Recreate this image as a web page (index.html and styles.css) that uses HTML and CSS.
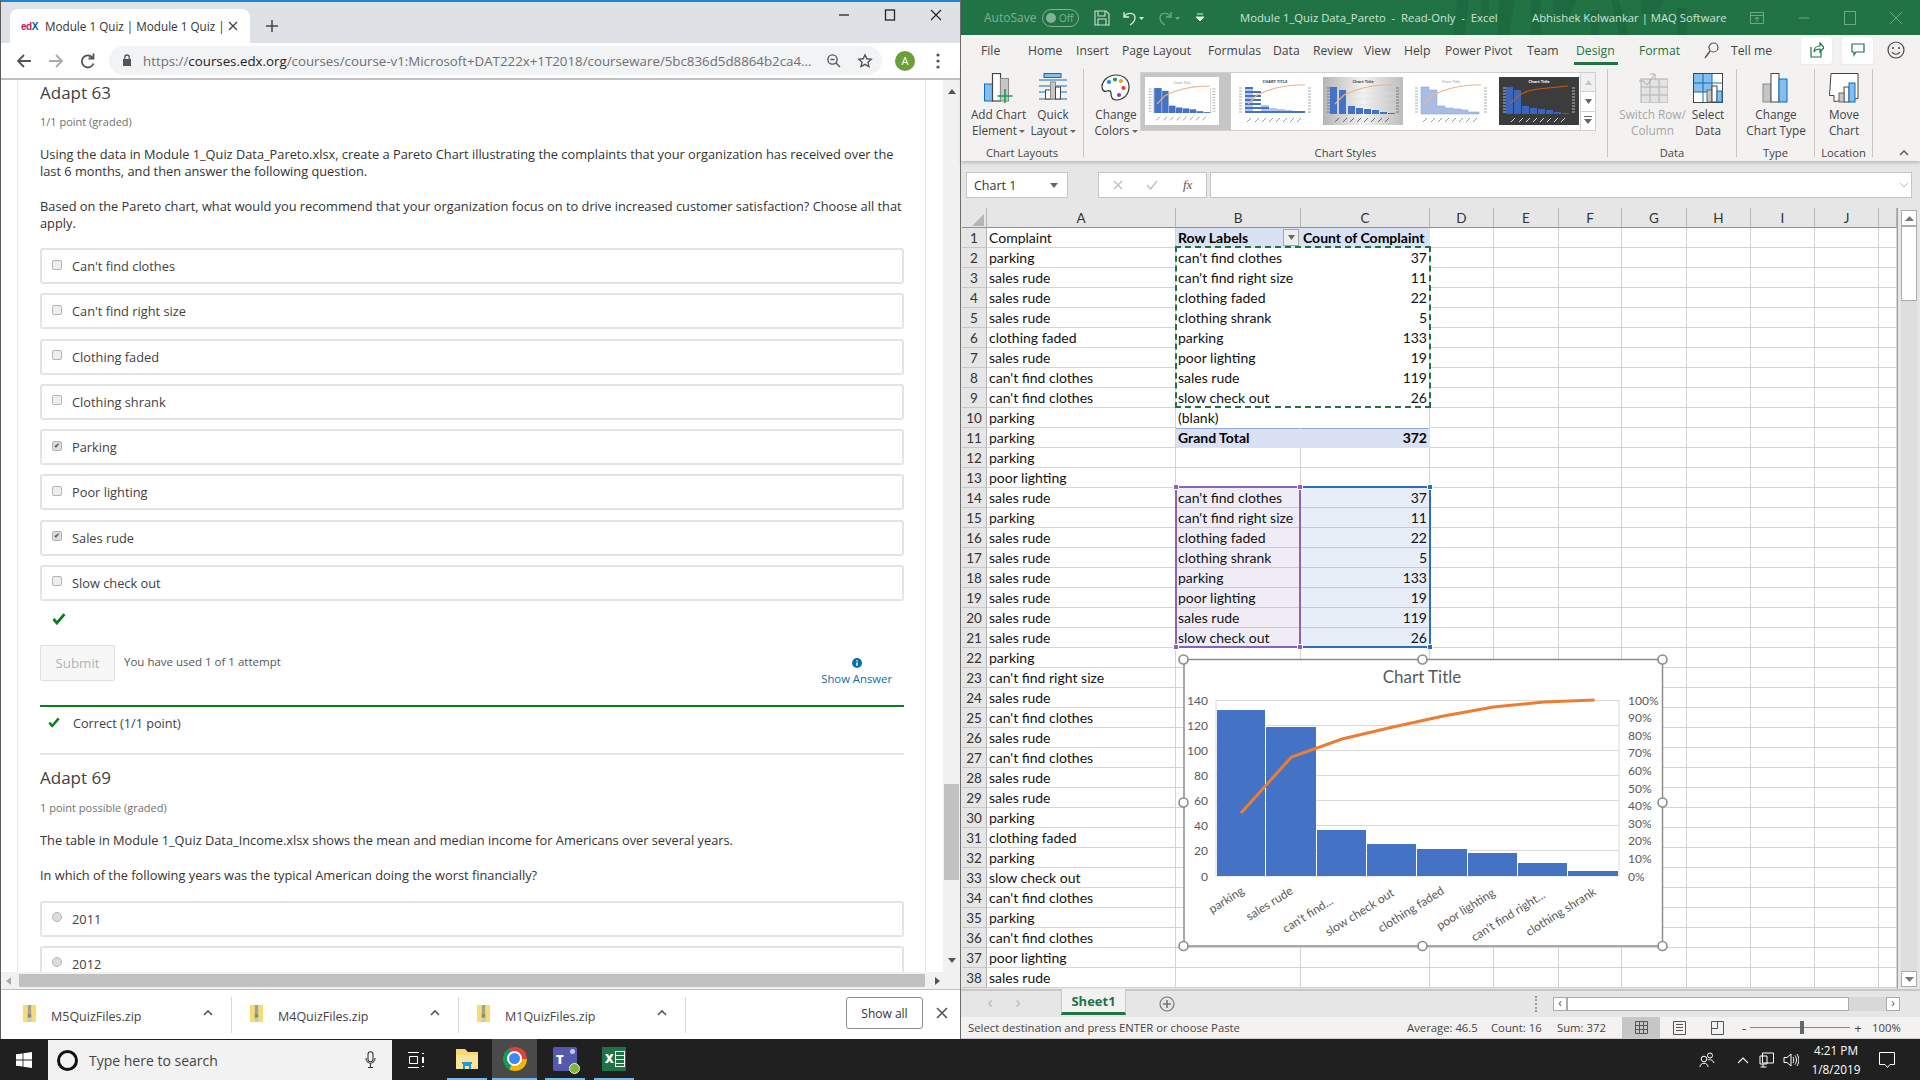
FILE: index.html
```html
<!DOCTYPE html>
<html lang="en">
<head>
<meta charset="utf-8">
<title>Module 1 Quiz and Pareto workbook</title>
<link rel="stylesheet" href="styles.css">
</head>
<body>
<svg class="defs" width="0" height="0" aria-hidden="true">
  <symbol id="ticks" viewBox="0 0 80 48">
    <g stroke-width="1" fill="none">
      <path d="M12 45l4-4M20 45l4-4M27 45l4-4M34 45l4-4M41 45l4-4M48 45l4-4M55 45l4-4M62 45l4-4"/>
    </g>
    <path d="M4 11h3M4 14h3M4 17h3M4 20h3M4 23h3M4 26h3M4 29h3M4 32h3M4 35h3M73 11h3M73 14h3M73 17h3M73 20h3M73 23h3M73 26h3M73 29h3M73 32h3M73 35h3" stroke-width=".8"/>
  </symbol>
</svg>

<div class="desktop">
  <div class="windows">

    <!-- Browser window -->
    <section class="chrome">
      <div class="tabstrip">
        <div class="tab">
          <span class="fav"><b>ed</b><i>X</i></span>
          <span class="tab-title">Module 1 Quiz | Module 1 Quiz |</span>
          <svg class="tab-x" width="10" height="10" viewBox="0 0 10 10"><path d="M1 1l8 8M9 1l-8 8" stroke="#444" stroke-width="1.3"/></svg>
        </div>
        <svg class="newtab" width="14" height="14" viewBox="0 0 14 14"><path d="M7 1v12M1 7h12" stroke="#444" stroke-width="1.5"/></svg>
        <div class="winctl">
          <svg width="12" height="12" viewBox="0 0 12 12"><path d="M1 6h10" stroke="#222" stroke-width="1.3"/></svg>
          <svg width="12" height="12" viewBox="0 0 12 12"><rect x="1.5" y="1" width="9" height="10" fill="none" stroke="#222" stroke-width="1.3"/></svg>
          <svg width="12" height="12" viewBox="0 0 12 12"><path d="M1 1l10 10M11 1L1 11" stroke="#222" stroke-width="1.1"/></svg>
        </div>
      </div>
      <div class="toolbar">
        <svg width="18" height="18" viewBox="0 0 18 18"><path d="M16 9H3M9 3L3 9l6 6" fill="none" stroke="#555" stroke-width="1.8"/></svg>
        <svg width="18" height="18" viewBox="0 0 18 18"><path d="M2 9h13M9 3l6 6-6 6" fill="none" stroke="#aaa" stroke-width="1.8"/></svg>
        <svg width="18" height="18" viewBox="0 0 18 18"><path d="M14.5 11.5a6 6 0 1 1-.6-5.3M14.5 1.5v5h-5" fill="none" stroke="#555" stroke-width="1.8"/></svg>
        <div class="omnibox">
          <svg width="10" height="13" viewBox="0 0 10 13"><rect x="1" y="5" width="8" height="7" fill="#555"/><path d="M2.8 5V3.2a2.2 2.2 0 0 1 4.4 0V5" fill="none" stroke="#555" stroke-width="1.3"/></svg>
          <span class="url"><span class="url-dim">https://</span>courses.edx.org<span class="url-dim">/courses/course-v1:Microsoft+DAT222x+1T2018/courseware/5bc836d5d8864b2ca4...</span></span>
          <svg width="15" height="15" viewBox="0 0 15 15"><circle cx="6.5" cy="6.5" r="4.6" fill="none" stroke="#555" stroke-width="1.4"/><path d="M10 10l4 4M4.5 6.5h4" stroke="#555" stroke-width="1.4"/></svg>
          <svg class="star" width="16" height="16" viewBox="0 0 16 16"><path d="M8 1.8l1.9 4 4.3.5-3.2 3 .9 4.3L8 11.4l-3.9 2.2.9-4.3-3.2-3 4.3-.5z" fill="none" stroke="#555" stroke-width="1.4"/></svg>
        </div>
        <span class="avatar">A</span>
        <svg class="dots" width="4" height="16" viewBox="0 0 4 16"><circle cx="2" cy="2" r="1.6" fill="#555"/><circle cx="2" cy="8" r="1.6" fill="#555"/><circle cx="2" cy="14" r="1.6" fill="#555"/></svg>
      </div>

      <div class="viewport">
        <div class="page">
          <div class="card">
            <h3 class="q-title">Adapt 63</h3>
            <div class="q-meta">1/1 point (graded)</div>
            <p class="q-text">Using the data in Module 1_Quiz Data_Pareto.xlsx, create a Pareto Chart illustrating the complaints that your organization has received over the last 6 months, and then answer the following question.</p>
            <p class="q-text">Based on the Pareto chart, what would you recommend that your organization focus on to drive increased customer satisfaction? Choose all that apply.</p>
            <div class="opt"><span class="box"></span>Can't find clothes</div>
            <div class="opt"><span class="box"></span>Can't find right size</div>
            <div class="opt"><span class="box"></span>Clothing faded</div>
            <div class="opt"><span class="box"></span>Clothing shrank</div>
            <div class="opt"><span class="box on">✔</span>Parking</div>
            <div class="opt"><span class="box"></span>Poor lighting</div>
            <div class="opt"><span class="box on">✔</span>Sales rude</div>
            <div class="opt"><span class="box"></span>Slow check out</div>
            <svg class="verdict" width="14" height="12" viewBox="0 0 14 12"><path d="M1.5 6l3.4 4L12.5 1.2" fill="none" stroke="#0a7d1e" stroke-width="2.8"/></svg>
            <div class="actions">
              <button class="submit" type="button">Submit</button>
              <span class="attempts">You have used 1 of 1 attempt</span>
              <span class="show">
                <svg width="10" height="10" viewBox="0 0 10 10"><circle cx="5" cy="5" r="5" fill="#0b6fa4"/><path d="M5 2.2v1.2M5 4.4v3.4" stroke="#fff" stroke-width="1.5"/></svg>
                <span>Show Answer</span>
              </span>
            </div>
            <div class="result">
              <svg width="12" height="11" viewBox="0 0 14 12"><path d="M1.5 6l3.4 4L12.5 1.2" fill="none" stroke="#0a7d1e" stroke-width="2.8"/></svg>
              <span>Correct (1/1 point)</span>
            </div>
            <h3 class="q-title second">Adapt 69</h3>
            <div class="q-meta">1 point possible (graded)</div>
            <p class="q-text solo">The table in Module 1_Quiz Data_Income.xlsx shows the mean and median income for Americans over several years.</p>
            <p class="q-text solo">In which of the following years was the typical American doing the worst financially?</p>
            <div class="opt"><span class="box radio"></span>2011</div>
            <div class="opt"><span class="box radio"></span>2012</div>
          </div>
        </div>
        <div class="vscroll">
          <span class="arr up"></span>
          <span class="vthumb"></span>
          <span class="arr down"></span>
        </div>
      </div>
      <div class="hscroll"><span class="arr left"></span><span class="hthumb"></span><span class="arr right"></span></div>

      <div class="shelf">
        <div class="dl"><svg class="zip" width="13" height="17" viewBox="0 0 13 17"><rect width="13" height="17" fill="#f6dc72"/><rect x="4.5" width="4" height="17" fill="#cfc9a6"/><path d="M5 1h3M5 3h3M5 5h3M5 7h3" stroke="#777"/><rect x="4.8" y="8.5" width="3.4" height="4" fill="#888"/></svg><span class="dl-name">M5QuizFiles.zip</span><svg class="caret" width="10" height="7" viewBox="0 0 10 7"><path d="M1 6l4-4 4 4" fill="none" stroke="#555" stroke-width="1.6"/></svg></div>
        <div class="dl"><svg class="zip" width="13" height="17" viewBox="0 0 13 17"><rect width="13" height="17" fill="#f6dc72"/><rect x="4.5" width="4" height="17" fill="#cfc9a6"/><path d="M5 1h3M5 3h3M5 5h3M5 7h3" stroke="#777"/><rect x="4.8" y="8.5" width="3.4" height="4" fill="#888"/></svg><span class="dl-name">M4QuizFiles.zip</span><svg class="caret" width="10" height="7" viewBox="0 0 10 7"><path d="M1 6l4-4 4 4" fill="none" stroke="#555" stroke-width="1.6"/></svg></div>
        <div class="dl"><svg class="zip" width="13" height="17" viewBox="0 0 13 17"><rect width="13" height="17" fill="#f6dc72"/><rect x="4.5" width="4" height="17" fill="#cfc9a6"/><path d="M5 1h3M5 3h3M5 5h3M5 7h3" stroke="#777"/><rect x="4.8" y="8.5" width="3.4" height="4" fill="#888"/></svg><span class="dl-name">M1QuizFiles.zip</span><svg class="caret" width="10" height="7" viewBox="0 0 10 7"><path d="M1 6l4-4 4 4" fill="none" stroke="#555" stroke-width="1.6"/></svg></div>
        <button class="showall" type="button">Show all</button>
        <svg class="shelf-x" width="12" height="12" viewBox="0 0 12 12"><path d="M1 1l10 10M11 1L1 11" stroke="#555" stroke-width="1.6"/></svg>
      </div>
    </section>

    <!-- Excel window -->
    <section class="excel">
      <div class="titlebar">
        <span class="autosave">AutoSave</span>
        <span class="toggle"><i></i><span>Off</span></span>
        <svg class="t-save" width="16" height="16" viewBox="0 0 16 16"><path d="M1 1h11l3 3v11H1z M4 1v5h7V1 M4 15v-6h8v6" fill="none" stroke="#c9e0d3" stroke-width="1.1"/></svg>
        <svg class="t-undo" width="22" height="16" viewBox="0 0 22 16"><path d="M2 2v5h5M2 7c3-5 11-5 11 1 0 3-2 5-5 7" fill="none" stroke="#dceee4" stroke-width="1.3"/><path d="M17 7h5l-2.5 3z" fill="#dceee4"/></svg>
        <svg class="t-redo" width="22" height="16" viewBox="0 0 22 16"><path d="M13 2v5H8M13 7c-3-5-11-5-11 1 0 3 2 5 5 7" fill="none" stroke="#6fa88a" stroke-width="1.3"/><path d="M17 7h5l-2.5 3z" fill="#6fa88a"/></svg>
        <svg class="t-cust" width="8" height="10" viewBox="0 0 8 10"><path d="M1 1h6M0 4h8l-4 4z" stroke="#dceee4" fill="#dceee4"/></svg>
        <span class="doc">Module 1_Quiz Data_Pareto&nbsp; -&nbsp; Read-Only&nbsp; -&nbsp; Excel</span>
        <span class="user">Abhishek Kolwankar | MAQ Software</span>
        <svg class="t-rib" width="14" height="14" viewBox="0 0 14 14"><path d="M.5 1.5h13v11H.5zM.5 4.5h13M7 11V6M5 8l2-2 2 2" fill="none" stroke="#6fa88a"/></svg>
        <svg class="t-min" width="12" height="12" viewBox="0 0 12 12"><path d="M1 6h10" stroke="#6fa88a"/></svg>
        <svg class="t-max" width="12" height="14" viewBox="0 0 12 14"><rect x=".5" y=".5" width="11" height="13" fill="none" stroke="#6fa88a"/></svg>
        <svg class="t-close" width="14" height="14" viewBox="0 0 14 14"><path d="M1 1l12 12M13 1L1 13" stroke="#6fa88a"/></svg>
        <svg class="t-art" width="250" height="35" viewBox="0 0 250 35"><g fill="#1e6a40"><path d="M6 0h12l-4 35H2zM30 0h8v18h-8zM48 0h16l-6 35H46zM80 0h10v35H80zM102 0h24l-10 20h-14zM140 10h8v25h-8zM160 0h8l10 35h-10zM190 0h24l-10 14h-14zM226 8h10v27h-10z"/></g></svg>
      </div>

      <nav class="rtabs">
        <span class="rt file">File</span>
        <span class="rt home">Home</span>
        <span class="rt ins">Insert</span>
        <span class="rt pl">Page Layout</span>
        <span class="rt fm">Formulas</span>
        <span class="rt dt">Data</span>
        <span class="rt rv">Review</span>
        <span class="rt vw">View</span>
        <span class="rt hp">Help</span>
        <span class="rt pp">Power Pivot</span>
        <span class="rt tm">Team</span>
        <span class="rt ds">Design</span>
        <span class="rt ft">Format</span>
        <span class="rt tell"><svg width="15" height="17" viewBox="0 0 15 17"><circle cx="9.5" cy="5.5" r="4.5" fill="none" stroke="#555" stroke-width="1.2"/><path d="M6 9l-5 7" stroke="#555" stroke-width="1.4"/></svg>Tell me</span>
        <span class="rbtn share"><svg width="14" height="16" viewBox="0 0 14 16"><path d="M1 5v10h10V9M4 10c0-4 3-6 6-6V1l4 4.5L10 10V7c-3 0-5 1-6 3z" fill="none" stroke="#217346" stroke-width="1.2"/></svg></span>
        <span class="rbtn comment"><svg width="14" height="14" viewBox="0 0 14 14"><path d="M1 1h12v8H5L3 12V9H1z" fill="none" stroke="#217346" stroke-width="1.2"/></svg></span>
        <svg class="smile" width="18" height="18" viewBox="0 0 18 18"><circle cx="9" cy="9" r="8" fill="none" stroke="#444" stroke-width="1.2"/><circle cx="6" cy="7" r="1" fill="#444"/><circle cx="12" cy="7" r="1" fill="#444"/><path d="M5 11c2 3 6 3 8 0" fill="none" stroke="#444" stroke-width="1.2"/></svg>
      </nav>

      <div class="ribbon">
        <div class="rgroup g-layouts">
          <div class="rg-body">
            <div class="rb w56">
              <svg width="30" height="30" viewBox="0 0 30 30"><rect x=".5" y="11" width="8" height="17" fill="#83beec" stroke="#0f6cbd"/><rect x="8.5" y=".5" width="8" height="27.5" fill="#fff" stroke="#444" stroke-width="1.2"/><rect x="16.5" y="5.5" width="8" height="22.5" fill="#c6c6c6" stroke="#888"/><path d="M21 16v14M13.500 23h15" stroke="#12a150" stroke-width="1.6"/></svg>
              <span>Add Chart<br>Element <u></u></span>
            </div>
            <div class="rb w52">
              <svg width="30" height="30" viewBox="0 0 30 30"><path d="M1 7h28M1 13h28M1 19h28M1 26h28" stroke="#0f6cbd" stroke-width="1.1"/><rect x="6" y=".5" width="17" height="4" fill="#83beec" stroke="#0f6cbd"/><rect x="7.500" y="17" width="5" height="9" fill="#fff" stroke="#444"/><rect x="12.500" y="9" width="5" height="17" fill="#c6c6c6" stroke="#888"/><rect x="17.500" y="14" width="5" height="12" fill="#fff" stroke="#444"/></svg>
              <span>Quick<br>Layout <u></u></span>
            </div>
          </div>
          <span class="rg-label">Chart Layouts</span>
        </div>
        <div class="rgroup g-styles">
          <div class="rg-body">
            <div class="rb w51">
              <svg width="30" height="30" viewBox="0 0 30 30"><path d="M15 2C7 2 1 8 1 14c0 4 3 5 5 4 2-1 4 0 4 2 0 3 1 7 5 7 8 0 13-6 13-13S23 2 15 2z" fill="#fff" stroke="#333" stroke-width="1.2"/><circle cx="8" cy="9" r="2.1" fill="#1e88e5"/><circle cx="14" cy="6.500" r="2.100" fill="#25a244"/><circle cx="20" cy="8" r="2.100" fill="#f59a23"/><circle cx="22.500" cy="15" r="2.100" fill="#e53935"/><circle cx="18" cy="22" r="2.100" fill="#8e3fb3"/></svg>
              <span>Change<br>Colors <u></u></span>
            </div>
            <div class="gallery">
              <div class="thumbs">
                <div class="th-sel">
                  <svg class="thumb" width="74" height="48" viewBox="0 0 80 48"><text x="40" y="6" class="thtext">Chart Title</text><path d="M9 10v27M71 10v27" stroke="#ccc"/><rect x="10" y="10" width="8" height="27" fill="#4472c4"/><rect x="18.500" y="13" width="7" height="24" fill="#4472c4"/><rect x="26" y="29" width="7" height="8" fill="#4472c4"/><rect x="33.500" y="31" width="7" height="6" fill="#4472c4"/><rect x="41" y="32" width="7" height="5" fill="#4472c4"/><rect x="48.500" y="33" width="7" height="4" fill="#4472c4"/><rect x="56" y="35" width="7" height="2" fill="#4472c4"/><rect x="63.500" y="36" width="7" height="1" fill="#4472c4"/><path d="M13 27l9-9 9-4 10-3 10-2 10-1 9 0" fill="none" stroke="#f4b183" stroke-width="1.2"/><use href="#ticks" stroke="#999"/></svg>
                </div>
                <svg class="thumb" width="80" height="48" viewBox="0 0 80 48"><text x="40" y="6" class="thtext bold">CHART TITLE</text><path d="M10 10h8v26h8v-8h8v3h8v1h8v1h7v2h11v1H10z" fill="#b4c7e7"/><path d="M10 10h8v2h-8zM10 14h16v2H10zM10 18h16v2H10zM10 22h16v2H10zM10 26h16v2H10zM10 30h24v2H10zM10 34h60v2H10z" fill="#4472c4"/><path d="M13 27l9-9 9-4 10-3 10-2 10-1 9 0" fill="none" stroke="#f4b183" stroke-width="1.2"/><use href="#ticks" stroke="#999"/></svg>
                <svg class="thumb" width="80" height="48" viewBox="0 0 80 48"><defs><linearGradient id="thg" x1="0" x2="1"><stop offset="0" stop-color="#b5b5b5"/><stop offset=".5" stop-color="#f2f2f2"/><stop offset="1" stop-color="#bdbdbd"/></linearGradient></defs><rect width="80" height="48" fill="url(#thg)"/><text x="40" y="6" class="thtext bold">Chart Title</text><path d="M5 16h70M5 22h70M5 28h70M5 34h70" stroke="#ddd" stroke-width=".6"/><rect x="7" y="10" width="7" height="27" fill="#4472c4"/><rect x="16" y="13" width="7" height="24" fill="#4472c4"/><rect x="25" y="29" width="7" height="8" fill="#4472c4"/><rect x="33" y="31" width="7" height="6" fill="#4472c4"/><rect x="41" y="32" width="7" height="5" fill="#4472c4"/><rect x="49" y="33" width="7" height="4" fill="#4472c4"/><rect x="57" y="35" width="7" height="2" fill="#4472c4"/><rect x="65" y="36" width="7" height="1" fill="#4472c4"/><path d="M12 27l9-9 9-4 10-3 10-2 10-1 9 0" fill="none" stroke="#f4b183" stroke-width="1.2"/><use href="#ticks" stroke="#666"/></svg>
                <svg class="thumb" width="80" height="48" viewBox="0 0 80 48"><text x="40" y="6" class="thtext">Chart Title</text><path d="M10 10h8v3h8v16h8v2h8v1h8v1h7v2h11v2H10z" fill="#a9bde4" stroke="#8faadc" stroke-width=".6"/><path d="M13 27l9-9 9-4 10-3 10-2 10-1 9 0" fill="none" stroke="#f4b183" stroke-width="1.2"/><use href="#ticks" stroke="#999"/></svg>
                <svg class="thumb" width="80" height="48" viewBox="0 0 80 48"><rect width="80" height="48" fill="#3c3c3c"/><text x="40" y="6" class="thtext white">Chart Title</text><rect x="7" y="10" width="7" height="27" fill="#3a66bb"/><rect x="15" y="13" width="7" height="24" fill="#3a66bb"/><rect x="23" y="29" width="7" height="8" fill="#3a66bb"/><rect x="31" y="31" width="7" height="6" fill="#3a66bb"/><rect x="39" y="32" width="7" height="5" fill="#3a66bb"/><rect x="47" y="33" width="7" height="4" fill="#3a66bb"/><rect x="55" y="35" width="7" height="2" fill="#3a66bb"/><rect x="63" y="36" width="7" height="1" fill="#3a66bb"/><path d="M11 27l9-9 9-4 10-2 10-1 10-1 10-1" fill="none" stroke="#c55a11" stroke-width="1.2"/><use href="#ticks" stroke="#ddd"/></svg>
              </div>
              <div class="spin">
                <span class="sp dim"><svg width="7" height="5" viewBox="0 0 7 5"><path d="M3.500 0l3.500 5H0z" fill="#c6c6c6"/></svg></span>
                <span class="sp"><svg width="7" height="5" viewBox="0 0 7 5"><path d="M0 0h7L3.500 5z" fill="#666"/></svg></span>
                <span class="sp"><svg width="8" height="9" viewBox="0 0 8 9"><path d="M0 0h8v1H0zM0 3h8L4 8z" fill="#666"/></svg></span>
              </div>
            </div>
          </div>
          <span class="rg-label">Chart Styles</span>
        </div>
        <div class="rgroup g-data">
          <div class="rg-body">
            <div class="rb w60 off">
              <svg width="30" height="30" viewBox="0 0 30 30"><rect x="3" y="6" width="27" height="24" fill="#e3e3e3" stroke="#b0b0b0"/><path d="M3 14h27M3 22h27M12 6v24M21 6v24" stroke="#b0b0b0"/><path d="M5 8l4 4 8-11M12 1h5v5M1 8h5" fill="none" stroke="#b0b0b0"/></svg>
              <span>Switch Row/<br>Column</span>
            </div>
            <div class="rb w48">
              <svg width="30" height="30" viewBox="0 0 30 30"><rect x=".5" y=".5" width="29" height="29" fill="#fff" stroke="#444"/><rect x="1" y="1" width="18" height="18" fill="#83beec"/><path d="M1 10h28M10 1v28M19 1v18M1 19h18" stroke="#0f6cbd"/><rect x="14" y="17" width="5" height="12" fill="#c6c6c6" stroke="#666"/><rect x="19" y="13" width="5" height="16" fill="#fff" stroke="#444"/><rect x="24" y="18" width="5" height="11" fill="#83beec" stroke="#0f6cbd"/></svg>
              <span>Select<br>Data</span>
            </div>
          </div>
          <span class="rg-label">Data</span>
        </div>
        <div class="rgroup g-type">
          <div class="rg-body">
            <div class="rb w70">
              <svg width="30" height="30" viewBox="0 0 30 30"><rect x="2" y="11" width="8" height="18" fill="#c6c6c6" stroke="#888"/><rect x="10" y=".5" width="8" height="28.500" fill="#fff" stroke="#444"/><rect x="18" y="6" width="8" height="23" fill="#83beec" stroke="#0f6cbd"/></svg>
              <span>Change<br>Chart Type</span>
            </div>
          </div>
          <span class="rg-label">Type</span>
        </div>
        <div class="rgroup g-loc">
          <div class="rg-body">
            <div class="rb w50">
              <svg width="30" height="30" viewBox="0 0 30 30"><path d="M2 .5h27v25l-24 3v-6H.5z" fill="#fff" stroke="#444"/><rect x="15" y="14" width="5" height="15" fill="#fff" stroke="#444"/><rect x="10" y="20" width="5" height="9" fill="#c6c6c6" stroke="#666"/><rect x="20" y="10" width="6" height="19" fill="#83beec" stroke="#0f6cbd"/></svg>
              <span>Move<br>Chart</span>
            </div>
          </div>
          <span class="rg-label">Location</span>
        </div>
        <svg class="collapse" width="10" height="7" viewBox="0 0 10 7"><path d="M1 6l4-4 4 4" fill="none" stroke="#555" stroke-width="1.4"/></svg>
      </div>

      <div class="fbar">
        <div class="namebox"><span>Chart 1</span><svg width="8" height="5" viewBox="0 0 8 5"><path d="M0 0h8L4 5z" fill="#666"/></svg></div>
        <span class="fdots"></span>
        <div class="fbtns">
          <svg width="10" height="10" viewBox="0 0 10 10"><path d="M1 1l8 8M9 1l-8 8" stroke="#c2c2c2" stroke-width="1.5"/></svg>
          <svg width="12" height="10" viewBox="0 0 12 10"><path d="M1 5l3.500 4L11 1" fill="none" stroke="#c2c2c2" stroke-width="1.5"/></svg>
          <i class="fx">fx</i>
        </div>
        <div class="finput"><svg width="8" height="5" viewBox="0 0 8 5"><path d="M0 0l4 4 4-4" fill="none" stroke="#bbb"/></svg></div>
      </div>

      <div class="sheetarea">
        <div class="sheet">
          <table class="grid">
            <colgroup><col class="c-h"><col class="c-a"><col class="c-b"><col class="c-c"><col class="c-d"><col class="c-e"><col class="c-f"><col class="c-g"><col class="c-h2"><col class="c-i"><col class="c-j"><col></colgroup>
            <thead><tr><th class="corner"><span></span></th><th>A</th><th>B</th><th>C</th><th>D</th><th>E</th><th>F</th><th>G</th><th>H</th><th>I</th><th>J</th><th></th></tr></thead>
            <tbody>
<tr><th>1</th><td>Complaint</td><td class="pv head nr"><span class="filter"><svg width="7" height="5" viewBox="0 0 7 5"><path d="M0 0h7L3.500 5z" fill="#666"/></svg></span><b>Row Labels</b></td><td class="pv head"><b>Count of Complaint</b></td><td></td><td></td><td></td><td></td><td></td><td></td><td></td><td></td></tr>
<tr><th>2</th><td>parking</td><td class="pv nr">can't find clothes</td><td class="pv n">37</td><td></td><td></td><td></td><td></td><td></td><td></td><td></td><td></td></tr>
<tr><th>3</th><td>sales rude</td><td class="pv nr">can't find right size</td><td class="pv n">11</td><td></td><td></td><td></td><td></td><td></td><td></td><td></td><td></td></tr>
<tr><th>4</th><td>sales rude</td><td class="pv nr">clothing faded</td><td class="pv n">22</td><td></td><td></td><td></td><td></td><td></td><td></td><td></td><td></td></tr>
<tr><th>5</th><td>sales rude</td><td class="pv nr">clothing shrank</td><td class="pv n">5</td><td></td><td></td><td></td><td></td><td></td><td></td><td></td><td></td></tr>
<tr><th>6</th><td>clothing faded</td><td class="pv nr">parking</td><td class="pv n">133</td><td></td><td></td><td></td><td></td><td></td><td></td><td></td><td></td></tr>
<tr><th>7</th><td>sales rude</td><td class="pv nr">poor lighting</td><td class="pv n">19</td><td></td><td></td><td></td><td></td><td></td><td></td><td></td><td></td></tr>
<tr><th>8</th><td>can't find clothes</td><td class="pv nr">sales rude</td><td class="pv n">119</td><td></td><td></td><td></td><td></td><td></td><td></td><td></td><td></td></tr>
<tr><th>9</th><td>can't find clothes</td><td class="pv nr">slow check out</td><td class="pv n">26</td><td></td><td></td><td></td><td></td><td></td><td></td><td></td><td></td></tr>
<tr><th>10</th><td>parking</td><td class="pv nr pre">(blank)</td><td class="pv pre"></td><td></td><td></td><td></td><td></td><td></td><td></td><td></td><td></td></tr>
<tr><th>11</th><td>parking</td><td class="pv total nr"><b>Grand Total</b></td><td class="pv total n"><b>372</b></td><td></td><td></td><td></td><td></td><td></td><td></td><td></td><td></td></tr>
<tr><th>12</th><td>parking</td><td></td><td></td><td></td><td></td><td></td><td></td><td></td><td></td><td></td><td></td></tr>
<tr><th>13</th><td>poor lighting</td><td></td><td></td><td></td><td></td><td></td><td></td><td></td><td></td><td></td><td></td></tr>
<tr><th>14</th><td>sales rude</td><td class="sp1">can't find clothes</td><td class="sb n">37</td><td></td><td></td><td></td><td></td><td></td><td></td><td></td><td></td></tr>
<tr><th>15</th><td>parking</td><td class="sp1">can't find right size</td><td class="sb n">11</td><td></td><td></td><td></td><td></td><td></td><td></td><td></td><td></td></tr>
<tr><th>16</th><td>sales rude</td><td class="sp1">clothing faded</td><td class="sb n">22</td><td></td><td></td><td></td><td></td><td></td><td></td><td></td><td></td></tr>
<tr><th>17</th><td>sales rude</td><td class="sp1">clothing shrank</td><td class="sb n">5</td><td></td><td></td><td></td><td></td><td></td><td></td><td></td><td></td></tr>
<tr><th>18</th><td>sales rude</td><td class="sp1">parking</td><td class="sb n">133</td><td></td><td></td><td></td><td></td><td></td><td></td><td></td><td></td></tr>
<tr><th>19</th><td>sales rude</td><td class="sp1">poor lighting</td><td class="sb n">19</td><td></td><td></td><td></td><td></td><td></td><td></td><td></td><td></td></tr>
<tr><th>20</th><td>sales rude</td><td class="sp1">sales rude</td><td class="sb n">119</td><td></td><td></td><td></td><td></td><td></td><td></td><td></td><td></td></tr>
<tr><th>21</th><td>sales rude</td><td class="sp1">slow check out</td><td class="sb n">26</td><td></td><td></td><td></td><td></td><td></td><td></td><td></td><td></td></tr>
<tr><th>22</th><td>parking</td><td></td><td></td><td></td><td></td><td></td><td></td><td></td><td></td><td></td><td></td></tr>
<tr><th>23</th><td>can't find right size</td><td></td><td></td><td></td><td></td><td></td><td></td><td></td><td></td><td></td><td></td></tr>
<tr><th>24</th><td>sales rude</td><td></td><td></td><td></td><td></td><td></td><td></td><td></td><td></td><td></td><td></td></tr>
<tr><th>25</th><td>can't find clothes</td><td></td><td></td><td></td><td></td><td></td><td></td><td></td><td></td><td></td><td></td></tr>
<tr><th>26</th><td>sales rude</td><td></td><td></td><td></td><td></td><td></td><td></td><td></td><td></td><td></td><td></td></tr>
<tr><th>27</th><td>can't find clothes</td><td></td><td></td><td></td><td></td><td></td><td></td><td></td><td></td><td></td><td></td></tr>
<tr><th>28</th><td>sales rude</td><td></td><td></td><td></td><td></td><td></td><td></td><td></td><td></td><td></td><td></td></tr>
<tr><th>29</th><td>sales rude</td><td></td><td></td><td></td><td></td><td></td><td></td><td></td><td></td><td></td><td></td></tr>
<tr><th>30</th><td>parking</td><td></td><td></td><td></td><td></td><td></td><td></td><td></td><td></td><td></td><td></td></tr>
<tr><th>31</th><td>clothing faded</td><td></td><td></td><td></td><td></td><td></td><td></td><td></td><td></td><td></td><td></td></tr>
<tr><th>32</th><td>parking</td><td></td><td></td><td></td><td></td><td></td><td></td><td></td><td></td><td></td><td></td></tr>
<tr><th>33</th><td>slow check out</td><td></td><td></td><td></td><td></td><td></td><td></td><td></td><td></td><td></td><td></td></tr>
<tr><th>34</th><td>can't find clothes</td><td></td><td></td><td></td><td></td><td></td><td></td><td></td><td></td><td></td><td></td></tr>
<tr><th>35</th><td>parking</td><td></td><td></td><td></td><td></td><td></td><td></td><td></td><td></td><td></td><td></td></tr>
<tr><th>36</th><td>can't find clothes</td><td></td><td></td><td></td><td></td><td></td><td></td><td></td><td></td><td></td><td></td></tr>
<tr><th>37</th><td>poor lighting</td><td></td><td></td><td></td><td></td><td></td><td></td><td></td><td></td><td></td><td></td></tr>
<tr><th>38</th><td>sales rude</td><td></td><td></td><td></td><td></td><td></td><td></td><td></td><td></td><td></td><td></td></tr>
            </tbody>
          </table>

          <div class="marquee"></div>
          <div class="sel sel-p"><i class="h tl"></i><i class="h tr"></i><i class="h bl"></i><i class="h br"></i></div>
          <div class="sel sel-b"><i class="h tr"></i><i class="h br"></i></div>

          <svg class="chart" width="500" height="310" viewBox="1170 650 500 310">
            <rect x="1184" y="659.500" width="478.500" height="286.500" fill="#fff" stroke="#8c8c8c" stroke-width="1.500"/>
            <text x="1422" y="683" class="c-title">Chart Title</text>
            <g stroke="#d9d9d9">
              <path d="M1216 700.500h403M1216 725.500h403M1216 750.500h403M1216 775.500h403M1216 800.500h403M1216 825.500h403M1216 850.500h403M1216 876h403M1216 700v176M1619 700v176"/>
            </g>
            <g fill="#4472c4">
              <rect x="1217" y="710" width="48" height="166"/>
              <rect x="1266" y="727" width="50" height="149"/>
              <rect x="1317" y="830" width="49" height="46"/>
              <rect x="1367" y="844" width="49" height="32"/>
              <rect x="1417" y="849" width="50" height="27"/>
              <rect x="1468" y="853" width="49" height="23"/>
              <rect x="1518" y="863" width="49" height="13"/>
              <rect x="1568" y="871" width="50" height="5"/>
            </g>
            <polyline points="1241,813 1291.500,757 1342,739 1393,727 1443.500,716 1493.500,707 1544,702 1594.500,700" fill="none" stroke="#ed7d31" stroke-width="3"/>
            <g class="c-axis c-left">
              <text x="1208" y="705">140</text><text x="1208" y="730">120</text><text x="1208" y="755">100</text><text x="1208" y="780">80</text><text x="1208" y="805">60</text><text x="1208" y="830">40</text><text x="1208" y="855">20</text><text x="1208" y="881">0</text>
            </g>
            <g class="c-axis">
              <text x="1628" y="705">100%</text><text x="1628" y="722">90%</text><text x="1628" y="740">80%</text><text x="1628" y="757">70%</text><text x="1628" y="775">60%</text><text x="1628" y="793">50%</text><text x="1628" y="810">40%</text><text x="1628" y="828">30%</text><text x="1628" y="845">20%</text><text x="1628" y="863">10%</text><text x="1628" y="881">0%</text>
            </g>
            <g class="c-axis c-cat">
              <text transform="translate(1245 893) rotate(-32)">parking</text>
              <text transform="translate(1294 893) rotate(-32)">sales rude</text>
              <text transform="translate(1334 903) rotate(-32)">can't find...</text>
              <text transform="translate(1395 895) rotate(-32)">slow check out</text>
              <text transform="translate(1445 893) rotate(-32)">clothing faded</text>
              <text transform="translate(1496 895) rotate(-32)">poor lighting</text>
              <text transform="translate(1546 897) rotate(-32)">can't find right...</text>
              <text transform="translate(1597 894) rotate(-32)">clothing shrank</text>
            </g>
            <g fill="#fff" stroke="#8c8c8c" stroke-width="1.600">
              <circle cx="1183.500" cy="659.500" r="4.500"/><circle cx="1422.500" cy="659.500" r="4.500"/><circle cx="1662.500" cy="659.500" r="4.500"/>
              <circle cx="1183.500" cy="802.500" r="4.500"/><circle cx="1662.500" cy="802.500" r="4.500"/>
              <circle cx="1183.500" cy="946" r="4.500"/><circle cx="1422.500" cy="946" r="4.500"/><circle cx="1662.500" cy="946" r="4.500"/>
            </g>
          </svg>
        </div>
        <div class="xvs">
          <span class="xv-btn"><svg width="9" height="5" viewBox="0 0 9 5"><path d="M4.500 0L9 5H0z" fill="#777"/></svg></span>
          <span class="xv-thumb"></span>
          <span class="xv-space"></span>
          <span class="xv-btn"><svg width="9" height="5" viewBox="0 0 9 5"><path d="M0 0h9L4.500 5z" fill="#777"/></svg></span>
        </div>
      </div>

      <div class="tabbar">
        <span class="nav-ar">‹</span><span class="nav-ar">›</span>
        <span class="sheettab">Sheet1</span>
        <svg class="addsheet" width="16" height="16" viewBox="0 0 16 16"><circle cx="8" cy="8" r="7" fill="none" stroke="#777" stroke-width="1.200"/><path d="M8 4v8M4 8h8" stroke="#777" stroke-width="1.600"/></svg>
        <span class="hdots"></span>
        <div class="xhs">
          <span class="xh-btn">‹</span><span class="xh-thumb"></span><span class="xh-space"></span><span class="xh-btn">›</span>
        </div>
      </div>

      <footer class="status">
        <span class="st-msg">Select destination and press ENTER or choose Paste</span>
        <span class="st-avg">Average: 46.5</span>
        <span class="st-cnt">Count: 16</span>
        <span class="st-sum">Sum: 372</span>
        <span class="view on"><svg width="13" height="13" viewBox="0 0 13 13"><path d="M.5.5h12v12H.5zM.5 4.500h12M.5 8.500h12M4.500.5v12M8.500.5v12" fill="none" stroke="#555"/></svg></span>
        <span class="view"><svg width="13" height="14" viewBox="0 0 13 14"><path d="M.5.5h12v13H.5zM3 3.500h7M3 6.500h7M3 9.500h7" fill="none" stroke="#555"/></svg></span>
        <span class="view"><svg width="13" height="14" viewBox="0 0 13 14"><path d="M.5.5h12v13H.5zM6.500.5v7H.5" fill="none" stroke="#555"/></svg></span>
        <span class="zoomer"><span class="zm">-</span><span class="ztrack"><i></i></span><span class="zm">+</span></span>
        <span class="st-zoom">100%</span>
      </footer>
    </section>
  </div>

  <!-- Taskbar -->
  <footer class="taskbar">
    <svg class="start" width="16" height="16" viewBox="0 0 16 16"><path d="M0 2.300l6.600-.9v6.200H0zM7.400 1.300L16 0v7.600H7.400zM0 8.400h6.600v6.200L0 13.700zM7.400 8.400H16V16l-8.600-1.200z" fill="#fff"/></svg>
    <div class="search">
      <span class="cortana"></span>
      <span class="search-text">Type here to search</span>
      <svg width="11" height="18" viewBox="0 0 11 18"><rect x="3" y=".7" width="5" height="10" rx="2.500" fill="none" stroke="#333" stroke-width="1.100"/><path d="M1 7c0 7 9 7 9 0M5.500 12v4M3 16.500h5" fill="none" stroke="#333" stroke-width="1.100"/></svg>
    </div>
    <svg class="taskview" width="16" height="16" viewBox="0 0 16 16"><path d="M0 .5h11M0 15.500h11M1.500 4.500h8v7h-8z" fill="none" stroke="#fff"/><path d="M14 1h2v1h-2zM14 5h2v6h-2zM14 14h2v1h-2z" fill="#fff"/></svg>
    <span class="pin p-files"><svg width="24" height="22" viewBox="0 0 24 22"><path d="M1 1h9l3 3h10v17H1z" fill="#f7d774"/><rect x="1" y="7" width="22" height="14" fill="#fbe49a"/><path d="M8 15h8v6h-2v-3h-4v3H8z" fill="#1e9bd7"/><rect x="7" y="14" width="10" height="2" fill="#1e9bd7"/></svg></span>
    <span class="pin p-chrome"><span class="chrome-ic"><i></i></span></span>
    <span class="pin p-teams"><span class="teams-ic"><b>T</b><i></i><em></em></span></span>
    <span class="pin p-xl"><span class="xl-ic"><b>X</b><i></i></span></span>
    <span class="tb-space"></span>
    <svg class="tray-i" width="16" height="16" viewBox="0 0 16 16"><circle cx="5" cy="7" r="2.800" fill="none" stroke="#fff"/><circle cx="11" cy="3.500" r="2.500" fill="none" stroke="#fff"/><path d="M1 15c0-5 8-5 8 0M9 8c2-1 5 0 6 3" fill="none" stroke="#fff"/></svg>
    <svg class="tray-c" width="12" height="8" viewBox="0 0 12 8"><path d="M1 7l5-5 5 5" fill="none" stroke="#fff" stroke-width="1.100"/></svg>
    <svg class="tray-n" width="16" height="16" viewBox="0 0 16 16"><path d="M3.500 1h11v10h-11zM1 4h7v8H1zM4 12v3M1.500 15h6" fill="none" stroke="#fff"/></svg>
    <svg class="tray-v" width="16" height="16" viewBox="0 0 16 16"><path d="M1 5.500h3l4-3.500v12l-4-3.500H1zM10 5c1 2 1 4 0 6M12 3.500c2 3 2 6 0 9M14 2c2.500 4 2.500 8 0 12" fill="none" stroke="#fff"/></svg>
    <div class="clock"><span>4:21 PM</span><span>1/8/2019</span></div>
    <svg class="notif" width="16" height="16" viewBox="0 0 16 16"><path d="M.5.5h15v12H11l-2.500 3-2.500-3H.5z" fill="none" stroke="#fff"/></svg>
  </footer>
</div>
</body>
</html>
```

FILE: styles.css
```css
* { box-sizing: border-box; }
html, body { margin: 0; height: 100%; }
body { width: 1920px; height: 1080px; overflow: hidden; background: #1f1f1f; font-family: "Open Sans", "Noto Sans", sans-serif; }
.defs { position: absolute; }
.desktop { display: flex; flex-direction: column; width: 1920px; height: 1080px; }
.windows { display: flex; height: 1039px; flex: none; }

/* ---------- Browser ---------- */
.chrome { width: 960px; height: 1039px; display: flex; flex-direction: column; background: #fff; border-left: 1px solid #5c5c5c; }
.tabstrip { height: 43px; background: #dee1e6; border-top: 2px solid #1a86d0; display: flex; align-items: flex-end; padding-left: 9px; position: relative; flex: none; }
.tab { width: 240px; height: 34px; background: #fff; border-radius: 8px 8px 0 0; display: flex; align-items: center; padding-left: 11px; font-size: 11.700px; color: #333; }
.fav { font-size: 10px; font-family: "Liberation Sans", sans-serif; width: 24px; letter-spacing: -.5px; }
.fav b { color: #c2185b; } .fav i { color: #0a5a9c; font-style: normal; font-weight: bold; }
.tab-title { width: 171px; white-space: nowrap; }
.tab-x { margin-left: 12px; }
.newtab { margin: 0 0 10px 15px; }
.winctl { margin-left: auto; margin-bottom: 22px; width: 104px; margin-right: 18px; display: flex; justify-content: space-between; }
.toolbar { height: 37px; flex: none; display: flex; align-items: center; gap: 14px; padding-left: 14px; border-bottom: 2px solid #c0c0c0; }
.omnibox { width: 773px; height: 29px; background: #f1f3f4; border-radius: 15px; margin-left: -2px; display: flex; align-items: center; padding-left: 13px; gap: 10px; flex: none; }
.url { width: 673px; white-space: nowrap; overflow: hidden; font-size: 13.300px; color: #222; margin-left: 1px; flex: none; }
.url-dim { color: #707070; }
.star { margin-left: 6px; }
.avatar { width: 20px; height: 20px; border-radius: 50%; background: #6a9f3a; color: #fff; font-size: 11px; display: flex; align-items: center; justify-content: center; margin-left: -1px; flex: none; }
.dots { margin-left: 7px; }

.viewport { flex: 1; display: flex; min-height: 0; }
.page { width: 942px; overflow: hidden; padding-left: 16px; }
.card { width: 909px; height: 100%; border-left: 1px solid #e6e6e6; border-right: 1px solid #e6e6e6; padding: 0 21px 0 22px; color: #414141; overflow: hidden; }
.q-title { margin: 0; font-size: 17px; font-weight: 400; line-height: 26px; color: #414141; }
.q-meta { margin-top: 8px; font-size: 11px; line-height: 16px; color: #707070; }
.q-title.second + .q-meta { margin-top: 9px; }
.q-text { margin: 16px 0 17px; font-size: 12.800px; line-height: 17.300px; color: #333; }
.q-text.solo { margin: 0 0 18px; }
.q-meta + .q-text.solo { margin-top: 16px; }
.opt { height: 36px; margin-bottom: 9.250px; border: 2px solid #e4e4e4; border-radius: 3px; display: flex; align-items: center; padding: 0 0 0 10px; font-size: 12.800px; color: #414141; }
.box { width: 10px; height: 10px; margin: -3px 10px 0 0; border: 1px solid #b4b4b4; border-radius: 2px; background: #eee; font-size: 7px; line-height: 8px; text-align: center; color: #333; flex: none; font-family: "DejaVu Sans", sans-serif; }
.box.on { background: #ddd; }
.box.radio { border-radius: 50%; background: #ddd; }
.q-text + .opt { margin-top: -1px; }
.q-text.solo + .opt { margin-top: -2px; }
.verdict { display: block; margin: 12px 0 0 12px; }
.actions { display: flex; align-items: flex-start; margin-top: 20px; height: 62px; border-bottom: 2px solid #0a7d1e; }
.submit { width: 75px; height: 36px; background: #f7f7f7; border: 1px solid #e0e0e0; border-radius: 2px; color: #b2b2b2; font: 13.300px "Open Sans", sans-serif; padding: 0; }
.attempts { margin: 9px 0 0 9px; font-size: 11.500px; line-height: 16px; color: #555; }
.show { margin: 13px 12px 0 auto; display: flex; flex-direction: column; align-items: center; gap: 3px; font-size: 11.300px; line-height: 16px; color: #0b6fa4; }
.result { height: 48px; padding: 7px 0 0 8px; display: flex; align-items: flex-start; gap: 13px; font-size: 12.700px; line-height: 18px; color: #414141; border-bottom: 2px solid #e6e6e6; }
.result svg { margin-top: 3px; }
.q-title.second { margin-top: 10px; }

.vscroll { width: 17px; background: #f1f1f1; display: flex; flex-direction: column; align-items: center; padding-top: 9px; position: relative; }
.vthumb { position: absolute; top: 704px; left: 1px; width: 15px; height: 96px; background: #c1c1c1; }
.arr { width: 0; height: 0; border: 4px solid transparent; }
.arr.up { border-top: 0; border-bottom: 5px solid #555; }
.arr.down { border-bottom: 0; border-top: 5px solid #555; margin-top: auto; margin-bottom: 9px; }
.hscroll { height: 18px; flex: none; background: #f1f1f1; display: flex; align-items: center; padding: 0 4px 0 5px; border-bottom: 1px solid #c0c0c0; }
.arr.left { border-left: 0; border-right: 5px solid #aaa; }
.arr.right { border-right: 0; border-left: 5px solid #555; margin-left: 5px; }
.hthumb { width: 906px; height: 13px; margin-left: 8px; background: #c1c1c1; margin-right: 5px; }
.shelf { height: 49px; flex: none; display: flex; align-items: center; background: #fff; padding-left: 4px; }
.dl { width: 227px; height: 36px; display: flex; align-items: center; border-right: 1px solid #d8d8d8; padding-left: 18px; font-size: 12.500px; color: #444; flex: none; }
.zip { margin-right: 15px; margin-top: -2px; }
.dl-name { width: 152px; padding-top: 3px; }
.caret { margin-top: -4px; }
.showall { margin-left: 160px; width: 77px; height: 32px; background: #fff; border: 1px solid #8f8f8f; border-radius: 3px; font: 12px "Open Sans", sans-serif; color: #333; margin-top: -3px; flex: none; padding: 0; }
.shelf-x { margin-left: 13px; margin-top: -3px; }

/* ---------- Excel ---------- */
.excel { width: 960px; height: 1039px; display: flex; flex-direction: column; background: #e6e6e6; border-left: 1px solid #6d6d6d; font-family: "Open Sans", "Noto Sans", sans-serif; }
.titlebar { height: 35px; flex: none; background: #217346; position: relative; display: flex; align-items: center; color: #d9eadf; font-size: 11.300px; padding-left: 23px; overflow: hidden; }
.t-art { position: absolute; left: 490px; top: 0; }
.titlebar > *:not(.t-art) { position: relative; z-index: 1; flex: none; }
.autosave { color: #7fb296; width: 58px; font-size: 12px; }
.toggle { width: 37px; height: 18px; border: 1px solid #7fb296; border-radius: 9px; display: flex; align-items: center; gap: 3px; padding-left: 3px; color: #7fb296; font-size: 10px; }
.toggle i { width: 10px; height: 10px; border-radius: 50%; background: #7fb296; }
.t-save { margin-left: 15px; }
.t-undo { margin-left: 12px; }
.t-redo { margin-left: 14px; }
.t-cust { margin-left: 16px; }
.doc { margin-left: 36px; width: 292px; white-space: nowrap; color: #cfe3d6; }
.user { width: 218px; white-space: nowrap; color: #cfe3d6; }
.t-min { margin-left: 34px; }
.t-max { margin-left: 34px; }
.t-close { margin-left: 33px; }

.rtabs { height: 30px; flex: none; background: #f3f2f1; display: flex; align-items: center; font-size: 12.200px; color: #444; position: relative; }
.rt { position: relative; white-space: nowrap; }
.file { margin-left: 20px; width: 47px; }
.home { width: 48px; }
.ins { width: 46px; }
.pl { width: 86px; }
.fm { width: 65px; }
.dt { width: 40px; }
.rv { width: 51px; }
.vw { width: 40px; }
.hp { width: 41px; }
.pp { width: 82px; }
.tm { width: 49px; }
.ds { width: 63px; color: #217346; }
.ds::after { content: ""; position: absolute; left: -2px; right: 21px; top: 20px; height: 3px; background: #217346; }
.ft { width: 64px; color: #217346; }
.tell { display: flex; align-items: center; gap: 12px; width: 98px; padding-left: 1px; }
.rbtn { width: 31px; height: 27px; background: #fff; border-radius: 2px; display: flex; align-items: center; justify-content: center; box-shadow: 0 0 1px #ccc; }
.comment { margin-left: 10px; }
.smile { margin-left: 14px; }

.ribbon { height: 96px; flex: none; background: #f3f2f1; display: flex; position: relative; box-shadow: 0 2px 3px rgba(0,0,0,.18); z-index: 2; padding-left: 0; }
.rgroup { display: flex; flex-direction: column; border-right: 1px solid #c8c6c4; margin: 4px 0 4px; height: 88px; position: relative; flex: none; }
.rg-body { display: flex; flex: 1; padding-top: 4px; }
.rg-label { height: 16px; line-height: 16px; text-align: center; font-size: 11.200px; color: #444; margin-bottom: -4px; }
.g-layouts { width: 123px; }
.g-layouts .rg-body { padding-left: 9px; }
.g-styles { width: 524px; }
.g-styles .rg-body { padding-left: 8px; }
.g-data { width: 129px; }
.g-data .rg-body { padding-left: 11px; }
.g-type { width: 78px; }
.g-type .rg-body { padding-left: 4px; }
.g-loc { width: 58px; }
.g-loc .rg-body { padding-left: 4px; }
.rb { display: flex; flex-direction: column; align-items: center; font-size: 11.800px; line-height: 16px; color: #444; text-align: center; white-space: nowrap; flex: none; }
.rb svg { height: 30px; flex: none; margin-bottom: 3px; }
.rb u { display: inline-block; width: 0; height: 0; border: 3px solid transparent; border-top: 3px solid #666; border-bottom: 0; vertical-align: middle; margin-left: -1px; }
.rb.off { color: #a6a6a6; }
.w56 { width: 57px; } .w52 { width: 52px; } .w51 { width: 48px; } .w60 { width: 67px; } .w48 { width: 44px; } .w70 { width: 70px; } .w50 { width: 50px; }
.gallery { width: 456px; height: 59px; margin-top: -1px; background: #fff; border: 1px solid #d0d0d0; display: flex; }
.thumbs { display: flex; align-items: flex-start; gap: 8px; width: 438px; }
.th-sel { width: 90px; height: 57px; background: #c6c6c6; padding: 4px 10px 0 4px; margin-right: -4px; flex: none; }
.thumb { display: block; background: #fff; margin-top: 4px; flex: none; }
.th-sel .thumb { margin-top: 0; }
.thtext { font: 4px "Open Sans", sans-serif; fill: #888; text-anchor: middle; }
.thtext.bold { font-weight: 700; fill: #444; }
.thtext.white { font-weight: 700; fill: #fff; }
.spin { width: 15px; margin-left: auto; display: flex; flex-direction: column; border-left: 1px solid #d0d0d0; flex: none; }
.sp { flex: 1; display: flex; align-items: center; justify-content: center; border-bottom: 1px solid #d0d0d0; background: #fff; }
.sp:last-child { border-bottom: 0; }
.sp.dim { background: #f0f0f0; }
.collapse { margin: 84px 0 0 26px; }

.fbar { height: 47px; flex: none; display: flex; align-items: flex-start; padding: 11px 0 0 5px; font-size: 12.500px; color: #333; background: #e6e6e6; }
.namebox { width: 102px; height: 26px; background: #fff; border: 1px solid #c6c6c6; display: flex; align-items: center; justify-content: space-between; padding: 0 9px 0 7px; }
.fdots { width: 30px; }
.fbtns { width: 109px; height: 26px; background: #fff; border: 1px solid #c6c6c6; display: flex; align-items: center; gap: 23px; padding-left: 14px; }
.fx { font: italic 13px "Liberation Serif", serif; color: #555; margin-left: 2px; }
.finput { width: 702px; height: 26px; margin-left: 3px; background: #fff; border: 1px solid #c6c6c6; display: flex; align-items: center; justify-content: flex-end; padding-right: 3px; }

.sheetarea { height: 781px; flex: none; display: flex; overflow: hidden; background: #e6e6e6; }
.sheet { width: 938px; position: relative; height: 781px; overflow: hidden; margin-left: 1px; border-right: 1px solid #9e9e9e; }
.grid { border-collapse: separate; border-spacing: 0; table-layout: fixed; width: 935px; font-family: Lato, "Open Sans", sans-serif; font-size: 14px; color: #111; background: #fff; }
.c-h { width: 25px; } .c-a { width: 189px; } .c-b { width: 125px; } .c-c { width: 129px; } .c-d { width: 64px; } .c-e { width: 65px; } .c-f { width: 63px; } .c-g { width: 65px; } .c-h2 { width: 64px; } .c-i { width: 64px; } .c-j { width: 64px; }
.grid th { background: #e6e6e6; font-weight: 400; font-size: 13.500px; color: #333; height: 20px; padding: 0; border-bottom: 1px solid #c8c8c8; border-right: 1px solid #b5b5b5; font-family: Lato, "Open Sans", sans-serif; }
.grid thead th { height: 20px; border-bottom: 1px solid #8f8f8f; }
.grid td { height: 20px; padding: 0 2px; border-right: 1px solid #d4d4d4; border-bottom: 1px solid #d4d4d4; white-space: nowrap; overflow: hidden; line-height: 19px; }
.corner span { display: block; width: 0; height: 0; margin: 4px 2px 0 auto; border-left: 12px solid transparent; border-bottom: 12px solid #b5b5b5; }
.n { text-align: right; }
.grid .pv { border-bottom-color: #fff; }
.grid .nr { border-right-color: #fff; }
.grid .head { background: #d9e1f2; border-bottom-color: #d9e1f2; border-right-color: #d9e1f2; color: #000; }
.grid .total { background: #d9e1f2; border-bottom-color: #d9e1f2; border-right-color: #d9e1f2; color: #000; box-shadow: inset 0 1px 0 #8ea9db; }
.grid .pre { border-bottom-color: transparent; }
.filter { float: right; width: 16px; height: 17px; margin: 1px -1px 0 0; background: #eee; border: 1px solid #a6a6a6; display: flex; align-items: center; justify-content: center; }
.sp1 { background: #f0ecf6; }
.sb { background: #e8eef8; }
.grid .sp1, .grid .sb { border-bottom-color: #c9c9c9; border-right-color: transparent; }
.marquee { position: absolute; left: 213px; top: 38px; width: 256px; height: 162px; border: 2px dashed #217346; }
.sel { position: absolute; top: 278px; height: 162px; pointer-events: none; }
.sel-p { left: 213px; width: 126px; border: 2px solid #8a63b8; z-index: 2; }
.sel-b { left: 339px; width: 130px; border: 2px solid #2f6cc4; border-left: 0; z-index: 1; }
.h { position: absolute; width: 6px; height: 6px; background: inherit; border: 1px solid #fff; }
.sel-p .h { background: #8a63b8; }
.sel-b .h { background: #2f6cc4; }
.tl { left: -4px; top: -4px; } .tr { right: -4px; top: -4px; } .bl { left: -4px; bottom: -4px; } .br { right: -4px; bottom: -4px; }
.chart { position: absolute; left: 208px; top: 442px; z-index: 3; }
.c-title { font: 17px Lato, "Open Sans", sans-serif; fill: #595959; text-anchor: middle; }
.c-axis { font: 12px Lato, "Open Sans", sans-serif; fill: #595959; }
.c-left { text-anchor: end; }
.c-cat { text-anchor: end; }
.xvs { width: 22px; display: flex; flex-direction: column; align-items: center; padding-top: 2px; padding-bottom: 2px; background: #e6e6e6; }
.xv-btn { width: 16px; height: 16px; background: #fff; border: 1px solid #ababab; display: flex; align-items: center; justify-content: center; flex: none; }
.xv-thumb { width: 16px; height: 75px; background: #fff; border: 1px solid #ababab; flex: none; }
.xv-space { flex: 1; background: #dedede; width: 16px; }
.tabbar { height: 28px; flex: none; background: #e6e6e6; display: flex; align-items: flex-start; position: relative; border-top: 2px solid #c8c8c8; }
.nav-ar { width: 28px; text-align: center; font-size: 17px; line-height: 22px; color: #b5b5b5; }
.nav-ar:first-child { margin-left: 15px; }
.sheettab { width: 65px; height: 26px; margin-left: 29px; border: 1px solid #c8c8c8; border-top: 0; border-bottom: 3px solid #217346; text-align: center; font: 700 13px/25px "Open Sans", sans-serif; color: #217346; margin-top: -2px; background: #f3f2f1; }
.addsheet { margin: 5px 0 0 33px; }
.hdots { width: 2px; height: 16px; margin: 5px 0 0 360px; border-left: 2px dotted #9a9a9a; }
.xhs { margin: 6px 0 0 16px; width: 347px; height: 14px; display: flex; background: #d8d8d8; }
.xh-btn { width: 14px; height: 14px; background: #fff; border: 1px solid #ababab; font-size: 12px; line-height: 10px; text-align: center; color: #555; }
.xh-thumb { width: 282px; background: #fff; border: 1px solid #ababab; }
.xh-space { flex: 1; }
.status { height: 22px; flex: none; background: #f3f2f1; display: flex; align-items: center; font-size: 11.300px; color: #444; padding-left: 7px; border-bottom: 1px solid #cfcfcf; white-space: nowrap; }
.st-msg { width: 439px; }
.st-avg { width: 84px; }
.st-cnt { width: 66px; }
.st-sum { width: 65px; }
.view { width: 38px; height: 22px; display: flex; align-items: center; justify-content: center; }
.view.on { background: #c6c6c6; }
.zoomer { display: flex; align-items: center; width: 122px; margin-left: 6px; gap: 4px; font-size: 13px; }
.ztrack { width: 100px; height: 1px; background: #888; position: relative; }
.ztrack i { position: absolute; left: 50px; top: -6px; width: 4px; height: 13px; background: #666; }
.st-zoom { margin-left: 8px; }

/* ---------- Taskbar ---------- */
.taskbar { height: 41px; flex: none; background: #202020; display: flex; align-items: center; }
.start { margin-left: 16px; flex: none; }
.search { width: 344px; height: 40px; margin: 1px 0 0 16px; background: #f2f2f2; display: flex; align-items: center; padding-left: 9px; flex: none; }
.cortana { width: 21px; height: 21px; border-radius: 50%; border: 3px solid #111; flex: none; }
.search-text { width: 276px; margin-left: 11px; font-size: 14px; color: #444; flex: none; }
.taskview { margin-left: 16px; flex: none; }
.pin { width: 40px; height: 41px; display: flex; align-items: center; justify-content: center; border-bottom: 2px solid #76b9ed; margin-left: 9px; flex: none; }
.p-files { margin-left: 23px; }
.p-chrome { width: 45px; margin-left: 5px; background: #4a4a4a; }
.p-teams { margin-left: 8px; }
.chrome-ic { width: 24px; height: 24px; border-radius: 50%; background: conic-gradient(from -30deg, #db4437 0 120deg, #f4b400 120deg 240deg, #0f9d58 240deg 360deg); display: flex; align-items: center; justify-content: center; }
.chrome-ic i { width: 11px; height: 11px; border-radius: 50%; background: #4285f4; border: 2px solid #fff; box-sizing: content-box; }
.teams-ic { width: 24px; height: 24px; position: relative; background: #5558af; border-radius: 2px; color: #fff; font: 700 13px/24px "Open Sans", sans-serif; padding-left: 3px; }
.teams-ic i { position: absolute; right: 2px; top: 2px; width: 5px; height: 5px; border-radius: 50%; background: #c8c9ef; }
.teams-ic em { position: absolute; right: -3px; bottom: -3px; width: 11px; height: 11px; border-radius: 50%; background: #7db83a; border: 1px solid #e8f5d8; }
.xl-ic { width: 24px; height: 24px; position: relative; background: #1f7244; color: #fff; font: 700 12px/24px "Open Sans", sans-serif; padding-left: 3px; }
.xl-ic i { position: absolute; right: 1px; top: 4px; width: 10px; height: 16px; border: 1px solid #fff; background: repeating-linear-gradient(#1f7244 0 3px, #fff 3px 4px); }
.tb-space { flex: 1; }
.tray-i { margin-right: 22px; }
.tray-c { margin-right: 10px; }
.tray-n { margin-right: 8px; }
.tray-v { margin-right: 3px; }
.clock { width: 68px; display: flex; flex-direction: column; align-items: center; gap: 3px; font-size: 11.800px; line-height: 16px; color: #fff; }
.notif { margin: 0 25px 0 9px; }
```
